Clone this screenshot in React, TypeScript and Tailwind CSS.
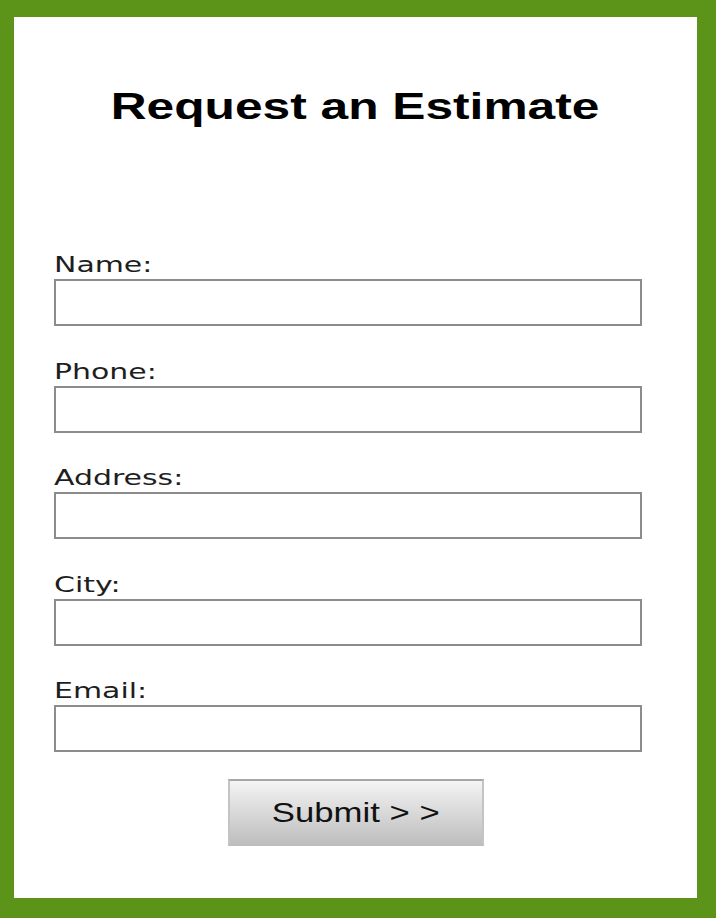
const fields = ["Name:", "Phone:", "Address:", "City:", "Email:"];

export default function App() {
  return (
    <div className="min-h-[918px] w-full bg-[#5b9418] pt-[17px] pl-[14px] pr-[19px] pb-[20px]">
      <div className="h-[881px] overflow-hidden bg-white pt-[72px]">
        <h1 className="text-center text-[36px] font-bold leading-none text-black [font-family:'Liberation_Sans',Arial,sans-serif]">
          <span className="inline-block scale-x-[1.38]">Request an Estimate</span>
        </h1>

        <div className="mt-[129px] flex flex-col gap-[34.5px] pl-[40px]">
          {fields.map((label) => (
            <div key={label} className="flex flex-col">
              <label className="origin-left scale-x-[1.36] text-[22px] leading-[22px] text-[#1e1e1e] [font-family:'DejaVu_Sans',Verdana,sans-serif]">
                {label}
              </label>
              <input
                type="text"
                className="mt-[3px] h-[47px] w-[588px] border-2 border-[#8c8c8c] bg-white outline-none"
              />
            </div>
          ))}
        </div>

        <div className="mt-[27px] flex justify-center">
          <button className="flex h-[67px] w-[256px] items-center justify-center border-2 border-t-[#a6a6a6] border-x-[#c4c4c4] border-b-[#bdbdbd] bg-gradient-to-b from-[#f4f4f4] to-[#bebebe] text-[28px] leading-none text-[#111] [font-family:'Liberation_Sans',Arial,sans-serif]">
            <span className="inline-block scale-x-[1.24]">Submit &gt; &gt;</span>
          </button>
        </div>
      </div>
    </div>
  );
}
